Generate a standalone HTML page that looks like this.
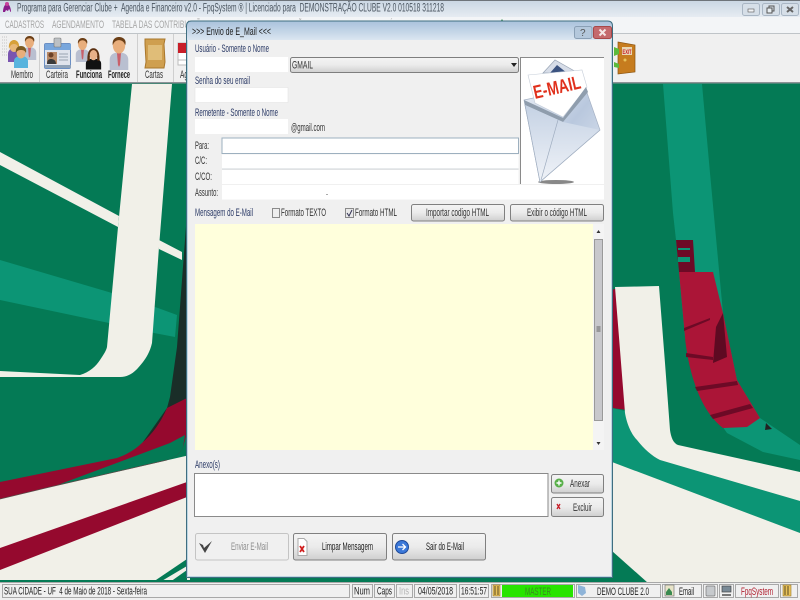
<!DOCTYPE html>
<html><head><meta charset="utf-8"><title>Envio de E_Mail</title>
<style>
html,body{margin:0;padding:0;background:#047a55;width:800px;height:600px;overflow:hidden}
svg{display:block;position:absolute;left:0;top:0;font-size:11px;filter:blur(.3px)}
text{font-family:"Liberation Sans",sans-serif;white-space:pre}
text:not([fill]){fill:#333}
text.l{fill:#2b3a66}
text.k{fill:#333}
</style></head><body>
<svg width="800" height="600" viewBox="0 0 800 600" xmlns="http://www.w3.org/2000/svg">
<defs>
<linearGradient id="tb" x1="0" y1="0" x2="0" y2="1"><stop offset="0" stop-color="#c9d6e3"/><stop offset="1" stop-color="#e6ecf2"/></linearGradient>
<linearGradient id="dt" x1="0" y1="0" x2="0" y2="1"><stop offset="0" stop-color="#a9c2dc"/><stop offset=".6" stop-color="#c6d7e8"/><stop offset="1" stop-color="#dbe6f1"/></linearGradient>
<linearGradient id="btn" x1="0" y1="0" x2="0" y2="1"><stop offset="0" stop-color="#f4f4f4"/><stop offset=".5" stop-color="#ebebeb"/><stop offset="1" stop-color="#cfcfcf"/></linearGradient>
<linearGradient id="env" x1="0" y1="0" x2="1" y2="1"><stop offset="0" stop-color="#e9eef6"/><stop offset=".5" stop-color="#b9c8de"/><stop offset="1" stop-color="#dfe6f0"/></linearGradient>
<linearGradient id="env2" x1="0" y1="0" x2="0" y2="1"><stop offset="0" stop-color="#c5d2e4"/><stop offset="1" stop-color="#f0f3f8"/></linearGradient>
<clipPath id="bg"><rect x="0" y="83" width="800" height="500"/></clipPath>
<symbol id="man" viewBox="0 0 20 32">
<path d="M1 32V22c0-5 4-7 9-7s9 2 9 7v10z" fill="#b9bfd0"/>
<path d="M8 15h4l-1 12-1 2-1-2z" fill="#c9606a"/>
<ellipse cx="10" cy="8" rx="6" ry="8" fill="#e8ae7c"/>
<path d="M4 8C3 2 7 0 10 0s8 2 6 8c-1-3-3-5-6-5S5 5 4 8z" fill="#6b3f17"/>
</symbol>
<symbol id="woman" viewBox="0 0 20 26">
<path d="M1 26V19c0-4 4-6 9-6s9 2 9 6v7z" fill="#111"/>
<path d="M3 16C2 5 6 1 10 1s8 4 7 15l-3-1c1-4 0-7-4-7s-5 3-4 7z" fill="#5a2f10"/>
<ellipse cx="10" cy="9" rx="4.5" ry="6" fill="#e8b088"/>
</symbol>
</defs>

<!-- desktop background -->
<g clip-path="url(#bg)">
<rect x="0" y="83" width="800" height="500" fill="#047a55"/>
<path d="M0 260L112 293 158 308 177 315 175 337 154 333 109 323 0 300z" fill="#0c9575"/>
<path d="M187 213L177 347 170 397 167 408 143 442 160 445 173 420 187 400z" fill="#1a2e28"/>
<path d="M132 84H172L159 247 152 343C150 352 146 358 143 362 136 371 130 377 120 377L0 377V371L80 375C90 372 96 366 100 360 104 354 106 351 107 347L118 227 119 217z" fill="#f1f0e8"/>
<path d="M0 152L119 216 118 227 0 165zM159 240L182 252 182 260 159 249z" fill="#f1f0e8"/>
<path d="M187 398L187 433 183 447C180 455 172 458 167 460L50 487 0 499 0 482 117 458C128 454 136 449 143 442 152 434 160 424 167 408z" fill="#95092e"/>
<path d="M185 435L183 447C180 455 172 458 167 460L55 486 170 443z" fill="#047a55"/>
<path d="M0 499L50 487 190 455V580H0z" fill="#f1f0e8"/>
<path d="M0 499L50 487 167 460" fill="none" stroke="#5a4a48" stroke-width=".7"/>
<path d="M187 482L0 548V570L187 497z" fill="#95092e"/>
<path d="M187 559L153 582H160L187 566zM187 570L170 582H187z" fill="#047a55"/>

<path d="M663 84H702L710 173 723 313 737 380 760 418 800 445V460L763 452 727 433 697 390 685 337 676 240 673 213z" fill="#0c9575"/>
<path d="M676 240H693L695 272H679z" fill="#6d0a26"/>
<path d="M678 248H690V250H678zM678 257H690V262H678z" fill="#0c9575"/>
<path d="M679 272H713L723 313 737 380 760 418 747 427 723 428C710 418 702 403 697 390 690 372 686 350 685 337z" fill="#ab1537"/>
<path d="M723 313L727 357 713 363 716 327z" fill="#5e0a22"/>
<path d="M684 328L710 318 710 320 684 331zM686 353L713 357 713 360 686 357zM695 387L737 381 738 385 697 391zM710 415L750 404 753 408 713 419z" fill="#6d0a26"/>
<path d="M766 423L772 429 765 430z" fill="#222"/>
<path d="M612 290L620 287 627 410 612 408z" fill="#95092e"/>
<path d="M612 408L625 411C627 425 632 435 637 440 644 449 652 456 660 460L800 501V533L612 462z" fill="#0c9575"/>
<path d="M615 287L659 286 665 363 670 430C671 437 673 443 678 445L800 472V501L660 460C652 456 644 449 637 440 632 435 627 425 625 413z" fill="#f1f0e8"/>
<path d="M612 462L800 533V583H648L612 551z" fill="#f1f0e8"/>
</g>

<!-- main title bar -->
<rect x="0" y="0" width="800" height="17" fill="url(#tb)"/>
<rect x="0" y="0" width="800" height="1" fill="#6e747a"/>
<path d="M3 12c0-3 1-6 2-7 1-2 3-2 4 0 1 1 2 4 2 7-1 0-1-2-2-3l-1 2-2-1-1 2z" fill="#8a1d8a"/>
<circle cx="7" cy="4" r="2" fill="#c8409a"/>
<text x="17" y="11.5" font-size="11.500" textLength="427" lengthAdjust="spacingAndGlyphs" fill="#4a5560">Programa para Gerenciar Clube +  Agenda e Financeiro v2.0 - FpqSystem ® | Licenciado para  DEMONSTRAÇÃO CLUBE V2.0 010518 311218</text>
<rect x="742.5" y="3.5" width="17" height="12" rx="2" fill="#d6dfe8" stroke="#a9b6c4"/>
<rect x="748" y="9" width="6" height="3" fill="#f2f4f6" stroke="#555" stroke-width=".6"/>
<rect x="762.5" y="3.5" width="17" height="12" rx="2" fill="#d6dfe8" stroke="#a9b6c4"/>
<rect x="769" y="6" width="5" height="5" fill="none" stroke="#555"/><rect x="767" y="8" width="5" height="5" fill="#e8eef2" stroke="#555"/>
<rect x="781.5" y="3.5" width="17" height="12" rx="2" fill="#d6dfe8" stroke="#a9b6c4"/>
<path d="M787 7l6 5M793 7l-6 5" stroke="#666" stroke-width="2"/>

<!-- menu bar -->
<rect x="0" y="17" width="800" height="16" fill="#f3f5f7"/>
<text x="5" y="28" textLength="39" lengthAdjust="spacingAndGlyphs" fill="#a6a6a6">CADASTROS</text>
<text x="52" y="28" textLength="52" lengthAdjust="spacingAndGlyphs" fill="#a6a6a6">AGENDAMENTO</text>
<text x="112" y="28" textLength="98" lengthAdjust="spacingAndGlyphs" fill="#a6a6a6">TABELA DAS CONTRIBUIÇÕES</text>
<text x="215" y="28" textLength="92" lengthAdjust="spacingAndGlyphs" fill="#a6a6a6">CONTROLE DE CONSTITUIÇÃO</text>
<text x="320" y="28" textLength="42" lengthAdjust="spacingAndGlyphs" fill="#a6a6a6">FINANCEIRO</text>
<text x="368" y="28" textLength="42" lengthAdjust="spacingAndGlyphs" fill="#a6a6a6">RELATÓRIOS</text>
<text x="418" y="28" textLength="50" lengthAdjust="spacingAndGlyphs" fill="#a6a6a6">FERRAMENTAS</text>
<text x="475" y="28" textLength="18" lengthAdjust="spacingAndGlyphs" fill="#a6a6a6">AJUDA</text>
<path d="M499 24l3-5 3 5z" fill="#2c8a4a"/>

<!-- toolbar -->
<rect x="0" y="33" width="800" height="50" fill="#f0f0f0"/>
<rect x="0" y="33" width="800" height="1" fill="#bfc4c8"/>
<rect x="0" y="82" width="800" height="1.5" fill="#8d9296"/>
<path d="M2 37h5M2 40h5M2 43h5M2 46h5M2 49h5M2 52h5M2 55h5" stroke="#c6c6c6" stroke-width="1" stroke-dasharray="1 1"/>
<rect x="39" y="34" width="1" height="48" fill="#cfcfcf"/>
<rect x="137" y="34" width="1" height="48" fill="#cfcfcf"/>
<rect x="173" y="34" width="1" height="48" fill="#cfcfcf"/>

<!-- Membro -->
<use href="#man" x="22" y="36" width="15" height="24"/>
<path d="M8 62V54c0-4 3-6 6-6s7 2 7 6v8z" fill="#7a55b0"/>
<ellipse cx="14" cy="46" rx="4.5" ry="6" fill="#e8b878"/>
<path d="M9 49c-1-6 2-9 5-9s6 3 5 9c-1-3-2-5-5-5s-4 2-5 5z" fill="#d7a13a"/>
<path d="M14 68V61c0-3 3-5 7-5s7 2 7 5v7z" fill="#58b4de"/>
<ellipse cx="21" cy="53" rx="4.5" ry="5.5" fill="#e8ae7c"/>
<path d="M16 53c-1-5 2-7 5-7s6 2 5 7c-1-2-2-3-5-3s-4 1-5 3z" fill="#7b5a20"/>
<text x="11" y="78" textLength="22" lengthAdjust="spacingAndGlyphs" class="k">Membro</text>

<!-- Carteira -->
<rect x="44.5" y="43.5" width="26" height="25" rx="1.5" fill="#dfe3ec" stroke="#6b8fc4"/>
<rect x="45" y="44" width="26" height="6" fill="#78a6dc"/>
<rect x="54" y="38" width="7" height="9" rx="1" fill="#bcc0c4" stroke="#777" stroke-width=".6"/>
<rect x="47" y="52" width="10" height="12" fill="#b78865"/>
<circle cx="51" cy="55" r="2.5" fill="#6b4128"/><path d="M47 64c0-4 2-5 4-5s5 1 5 5z" fill="#3a3a3a"/>
<path d="M59 54h9M59 57h9M59 60h9" stroke="#a8b0bb" stroke-width="1.2"/>
<rect x="45" y="65" width="26" height="3" fill="#8fa2b8"/>
<text x="46" y="78" textLength="22" lengthAdjust="spacingAndGlyphs" class="k">Carteira</text>

<!-- Funciona -->
<use href="#man" x="75" y="37" width="15" height="26"/>
<use href="#woman" x="85" y="47" width="17" height="23"/>
<text x="76" y="78" font-weight="bold" textLength="26" lengthAdjust="spacingAndGlyphs" fill="#222">Funciona</text>

<!-- Fornece -->
<use href="#man" x="107" y="37" width="24" height="33"/>
<text x="108" y="78" font-weight="bold" textLength="22" lengthAdjust="spacingAndGlyphs" fill="#222">Fornece</text>

<!-- Cartas -->
<path d="M145 39h20l-1 5 1 18-1 6h-19l1-6-1-18z" fill="#cf9f4f" stroke="#a9772c" stroke-width="1"/>
<path d="M148 45h14v15h-14z" fill="#e0bd78"/>
<text x="145" y="78" textLength="18" lengthAdjust="spacingAndGlyphs" class="k">Cartas</text>

<!-- agenda -->
<rect x="178" y="43" width="10" height="22" fill="#fff" stroke="#bbb"/>
<rect x="178" y="43" width="10" height="10" fill="#c81e28"/>
<path d="M178 60h10" stroke="#bbb"/>
<text x="180" y="78" textLength="8" lengthAdjust="spacingAndGlyphs" class="k">Ag</text>

<!-- exit door -->
<path d="M618 42l17 3v27l-17 2z" fill="#c67c1e" stroke="#8c5512" stroke-width=".7"/>
<rect x="622" y="47" width="10" height="8" fill="#e8d6b4"/>
<text x="622.5" y="54" font-size="6" font-weight="bold" textLength="9" lengthAdjust="spacingAndGlyphs" fill="#c81e28">EXIT</text>
<circle cx="625" cy="60" r="1.5" fill="#e8c25a"/>
<path d="M614 47l5 2v5l-5 2zM614 62l5 2v4l-5-1z" fill="#5cbb3c"/>

<!-- dialog -->
<path d="M186 26q0-5 5-5h417q5 0 5 5V578H186z" fill="#f0f0f0"/>
<path d="M186 26q0-5 5-5h417q5 0 5 5v14H186z" fill="url(#dt)"/>
<path d="M186.5 26q0-5 5-5h416q5 0 5 5V577.5H186.5z" fill="none" stroke="#3f6e80"/>
<path d="M187.5 40V576.5H611.5V40" fill="none" stroke="#bcd6e2"/>
<text x="192" y="35" font-size="11" textLength="79" lengthAdjust="spacingAndGlyphs" fill="#222">&gt;&gt;&gt; Envio de E_Mail &lt;&lt;&lt;</text>
<rect x="574.5" y="26.5" width="17.5" height="12" rx="2" fill="#b4c8dc" stroke="#8aa0b6"/>
<text x="580" y="36" font-size="10" fill="#555">?</text>
<rect x="593.5" y="26.5" width="18" height="12" rx="2" fill="#c46a6e" stroke="#a84848"/>
<path d="M599.5 29.5l6 6M605.5 29.5l-6 6" stroke="#f3e6e6" stroke-width="2"/>

<text x="195" y="52" textLength="74" lengthAdjust="spacingAndGlyphs" class="l">Usuário - Somente o Nome</text>
<rect x="195" y="57" width="93" height="15" fill="#fff"/>
<rect x="290.5" y="57.5" width="228" height="15" rx="2" fill="url(#btn)" stroke="#7e7e7e"/>
<text x="292" y="68.500" textLength="21" lengthAdjust="spacingAndGlyphs" fill="#333">GMAIL</text>
<path d="M511 63h6l-3 4z" fill="#222"/>

<text x="195" y="84" textLength="55" lengthAdjust="spacingAndGlyphs" class="l">Senha do seu email</text>
<rect x="195" y="87.5" width="93" height="15" fill="#fff" stroke="#e4e4e4" stroke-width=".6"/>
<text x="195" y="116" textLength="83" lengthAdjust="spacingAndGlyphs" class="l">Remetente - Somente o Nome</text>
<rect x="195" y="119" width="93" height="15" fill="#fff"/>
<text x="291" y="131" textLength="34" lengthAdjust="spacingAndGlyphs" class="k">@gmail.com</text>

<text x="195" y="149" textLength="14" lengthAdjust="spacingAndGlyphs" class="k">Para:</text>
<rect x="222" y="138" width="296.5" height="15.5" fill="#fff" stroke="#9db0bf"/>
<text x="195" y="164" textLength="12" lengthAdjust="spacingAndGlyphs" class="k">C/C:</text>
<rect x="222" y="154.5" width="296.5" height="14" fill="#fff"/>
<text x="195" y="180" textLength="17" lengthAdjust="spacingAndGlyphs" class="k">C/CO:</text>
<rect x="222" y="170" width="296.5" height="14" fill="#fff"/>
<rect x="222" y="168.5" width="296.5" height="1" fill="#cfd4d8"/>
<text x="195" y="196" textLength="23" lengthAdjust="spacingAndGlyphs" class="k">Assunto:</text>
<rect x="222" y="185" width="382" height="14.5" fill="#fff"/>
<rect x="326.5" y="194" width="1" height="1" fill="#555"/>

<!-- email image -->
<rect x="520" y="57" width="84" height="127" fill="#fff"/>
<path d="M520.5 184V57.5H604" fill="none" stroke="#8a8a8a"/>
<path d="M543 73L555 60 578 73z" fill="#d7dde8" stroke="#9aa6b6" stroke-width=".7"/>
<path d="M550 73L557 65 567 73z" fill="#3b5380"/>
<ellipse cx="556" cy="182" rx="18" ry="2" fill="#888"/>
<path d="M524 100L585 87 600 130 540 182z" fill="url(#env)" stroke="#a5b1c4" stroke-width=".7"/>
<path d="M528 75L582 70 587 87 563 117 535 103z" fill="#fff" stroke="#c6ced9" stroke-width=".6"/>
<path d="M524 100L535 105 563 118 586 87 588 92 563 122 525 105z" fill="#8f9dad"/>
<path d="M525 105L563 122 600 130 540 182z" fill="url(#env2)"/>
<path d="M541 180L558 120M541 181L600 130M525 105L540 182" stroke="#9fadc0" stroke-width=".7" fill="none"/>
<text x="535" y="99" font-size="19" font-weight="bold" textLength="48" lengthAdjust="spacingAndGlyphs" fill="#e0301c" transform="rotate(-13 535 99)">E-MAIL</text>

<!-- message controls -->
<text x="195" y="216" textLength="58" lengthAdjust="spacingAndGlyphs" class="l">Mensagem do E-Mail</text>
<rect x="272.5" y="208.5" width="7" height="9" fill="#eee" stroke="#8a8a8a"/>
<text x="281" y="216" textLength="45" lengthAdjust="spacingAndGlyphs" class="k">Formato TEXTO</text>
<rect x="345.5" y="208.5" width="8" height="9" fill="#e8e8e8" stroke="#8a8a8a"/>
<path d="M347 213l2 3 3-6" stroke="#335" fill="none"/>
<text x="355" y="216" textLength="42" lengthAdjust="spacingAndGlyphs" class="k">Formato HTML</text>
<rect x="411.5" y="204.5" width="93" height="16.5" rx="2" fill="url(#btn)" stroke="#808080"/>
<text x="426" y="216" textLength="63" lengthAdjust="spacingAndGlyphs" class="k">Importar codigo HTML</text>
<rect x="510.5" y="204.5" width="93" height="16.5" rx="2" fill="url(#btn)" stroke="#808080"/>
<text x="527" y="216" textLength="60" lengthAdjust="spacingAndGlyphs" class="k">Exibir o código HTML</text>

<!-- editor -->
<rect x="195" y="224" width="398" height="226" fill="#ffffdc"/>
<rect x="593" y="224" width="11" height="226" fill="#f4f4f4"/>
<rect x="594.5" y="239.5" width="8" height="181" fill="#c8c8cc" stroke="#9a9a9a"/>
<path d="M596.5 327h4M596.5 329h4M596.5 331h4" stroke="#666"/>
<path d="M596.5 233l2-3 2 3zM596.5 442l2 3 2-3z" fill="#333"/>

<!-- attachments -->
<text x="195" y="468" textLength="25" lengthAdjust="spacingAndGlyphs" class="l">Anexo(s)</text>
<rect x="194.5" y="473.5" width="353.5" height="43" fill="#fff" stroke="#8a8a8a"/>
<rect x="551.5" y="474.5" width="52" height="18.5" rx="2" fill="url(#btn)" stroke="#808080"/>
<circle cx="559" cy="483" r="4.5" fill="#59b04a"/><path d="M559 480.5v5M556.5 483h5" stroke="#fff" stroke-width="1.4"/>
<text x="570" y="487" textLength="20" lengthAdjust="spacingAndGlyphs" class="k">Anexar</text>
<rect x="551.5" y="497.5" width="52" height="19" rx="2" fill="url(#btn)" stroke="#808080"/>
<path d="M557 504l3 5M560 504l-3 5" stroke="#c81e28" stroke-width="1.3"/>
<text x="573" y="511" textLength="19" lengthAdjust="spacingAndGlyphs" class="k">Excluir</text>

<!-- bottom buttons -->
<rect x="195.5" y="533.5" width="93" height="26.5" rx="2" fill="#f0f0f0" stroke="#c4c4c4"/>
<path d="M199 543l4 2 1 3 8-7-7 12z" fill="#444"/>
<text x="231" y="550" textLength="37" lengthAdjust="spacingAndGlyphs" fill="#8e8e8e">Enviar E-Mail</text>
<rect x="293.5" y="533.5" width="93" height="26.5" rx="2" fill="url(#btn)" stroke="#808080"/>
<path d="M298 538.5h6l3 3v14h-9z" fill="#fff" stroke="#aaa"/>
<path d="M300 546l4 6M304 546l-4 6" stroke="#d02020" stroke-width="1.8"/>
<text x="322" y="550" textLength="51" lengthAdjust="spacingAndGlyphs" fill="#222">Limpar Mensagem</text>
<rect x="392.5" y="533.5" width="93" height="26.5" rx="2" fill="url(#btn)" stroke="#808080"/>
<circle cx="402" cy="547" r="6.5" fill="#3b78d8" stroke="#1f4a9a"/>
<path d="M398 547h7M402.5 544l3 3-3 3" fill="none" stroke="#fff" stroke-width="1.3"/>
<text x="426" y="550" textLength="38" lengthAdjust="spacingAndGlyphs" fill="#222">Sair do E-Mail</text>

<!-- status bar -->
<rect x="0" y="582" width="800" height="18" fill="#f0f0f0"/>
<rect x="0" y="582" width="800" height="1" fill="#a8a8a8"/>
<g fill="none" stroke="#a8a8a8">
<rect x="2.5" y="584.5" width="347" height="13"/>
<rect x="352.5" y="584.5" width="20" height="13"/>
<rect x="374.5" y="584.5" width="20" height="13"/>
<rect x="396.5" y="584.5" width="16" height="13"/>
<rect x="414.5" y="584.5" width="42" height="13"/>
<rect x="459.5" y="584.5" width="29" height="13"/>
<rect x="491.5" y="584.5" width="83" height="13"/>
<rect x="576.5" y="584.5" width="84" height="13"/>
<rect x="662.5" y="584.5" width="39" height="13"/>
<rect x="703.5" y="584.5" width="14" height="13"/>
<rect x="719.5" y="584.5" width="14" height="13"/>
<rect x="735.5" y="584.5" width="43" height="13"/>
<rect x="780.5" y="584.5" width="17" height="13"/>
</g>
<text x="4" y="594.5" textLength="143" lengthAdjust="spacingAndGlyphs" fill="#222">SUA CIDADE - UF  4 de Maio de 2018 - Sexta-feira</text>
<text x="354" y="594.5" textLength="16" lengthAdjust="spacingAndGlyphs" fill="#222">Num</text>
<text x="377" y="594.5" textLength="15" lengthAdjust="spacingAndGlyphs" fill="#222">Caps</text>
<text x="399" y="594.5" textLength="10" lengthAdjust="spacingAndGlyphs" fill="#b5b5b5">Ins</text>
<text x="418" y="594.5" textLength="35" lengthAdjust="spacingAndGlyphs" fill="#222">04/05/2018</text>
<text x="461" y="594.5" textLength="26" lengthAdjust="spacingAndGlyphs" fill="#222">16:51:57</text>
<rect x="502" y="585" width="71" height="12" fill="#27e400"/>
<text x="525" y="595" textLength="26" lengthAdjust="spacingAndGlyphs" fill="#3a8a20">MASTER</text>
<rect x="493" y="585" width="7" height="11" fill="#e8c25a" stroke="#9a7a2a" stroke-width=".6"/>
<path d="M495 586v9M498 586v9" stroke="#5a4a20"/>
<path d="M578 585l7 2 1 6-4 3-4-3z" fill="#8fb4d8"/>
<text x="597" y="595" textLength="52" lengthAdjust="spacingAndGlyphs" fill="#222">DEMO CLUBE 2.0</text>
<rect x="665" y="585" width="9" height="11" fill="#e8e4c8" stroke="#777" stroke-width=".7"/>
<path d="M666 592l3-4 3 4v3h-6z" fill="#3a8a50"/>
<text x="679" y="595" textLength="15" lengthAdjust="spacingAndGlyphs" fill="#222">Email</text>
<rect x="706" y="586" width="9" height="10" rx="1" fill="#c6c9cc" stroke="#777" stroke-width=".7"/>
<rect x="722" y="586" width="9" height="6" fill="#7a8a96" stroke="#444" stroke-width=".7"/>
<path d="M722 595h9" stroke="#444" stroke-width="1.4"/>
<text x="741" y="595" textLength="32" lengthAdjust="spacingAndGlyphs" fill="#b02030">FpqSystem</text>
<rect x="783" y="585" width="8" height="11" fill="#e8c25a" stroke="#9a7a2a" stroke-width=".6"/>
<path d="M785 586v9M788 586v9" stroke="#5a4a20"/>
</svg>
</body></html>
